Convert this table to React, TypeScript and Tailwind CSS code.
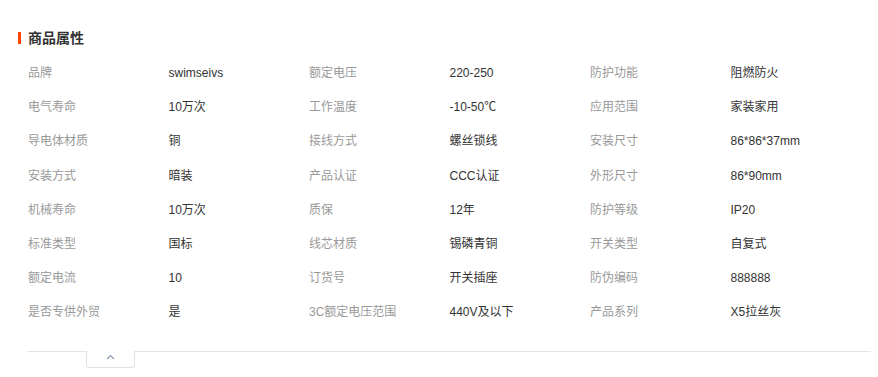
const rows: [string, string, string, string, string, string][] = [
  ["品牌", "swimseivs", "额定电压", "220-250", "防护功能", "阻燃防火"],
  ["电气寿命", "10万次", "工作温度", "-10-50℃", "应用范围", "家装家用"],
  ["导电体材质", "铜", "接线方式", "螺丝锁线", "安装尺寸", "86*86*37mm"],
  ["安装方式", "暗装", "产品认证", "CCC认证", "外形尺寸", "86*90mm"],
  ["机械寿命", "10万次", "质保", "12年", "防护等级", "IP20"],
  ["标准类型", "国标", "线芯材质", "锡磷青铜", "开关类型", "自复式"],
  ["额定电流", "10", "订货号", "开关插座", "防伪编码", "888888"],
  ["是否专供外贸", "是", "3C额定电压范围", "440V及以下", "产品系列", "X5拉丝灰"],
];

export default function App() {
  return (
    <div className="w-[878px] h-[377px] bg-white overflow-hidden font-['Liberation_Sans','Noto_Sans_CJK_SC',sans-serif]">
      <div className="pt-[31px] pl-[18px] flex items-center h-[45px]">
        <span className="w-[3px] h-[12px] bg-[#ff4400]" />
        <h2 className="ml-[7px] text-[14px] font-bold leading-[14px] text-[#333]">商品属性</h2>
      </div>
      <div className="pl-[28px] pt-[11px] grid grid-cols-[repeat(6,140.5px)] text-[12px]">
        {rows.map((r, i) =>
          r.map((cell, j) => (
            <div
              key={`${i}-${j}`}
              className={`h-[34.2px] flex items-center whitespace-nowrap ${
                j % 2 === 0 ? "text-[#999]" : "text-[#333]"
              }`}
            >
              {cell}
            </div>
          ))
        )}
      </div>
      <div className="mt-[21px] ml-[27px] w-[844px] border-t border-[#e5e5e5] relative">
        <button className="absolute left-[59px] -top-px w-[49px] h-[17px] bg-white border border-t-0 border-[#e0e0e0] rounded-b-[4px] flex items-start justify-center pt-[3px]">
          <svg width="9" height="6" viewBox="0 0 9 6" fill="none">
            <path d="M1 5 L4.5 1.5 L8 5" stroke="#8a9bb0" strokeWidth="1.2" />
          </svg>
        </button>
      </div>
    </div>
  );
}
